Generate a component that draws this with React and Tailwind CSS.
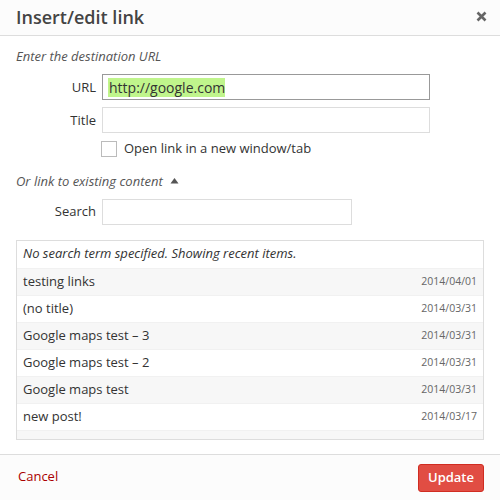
export default function App() {
  const rows = [
    ["testing links", "2014/04/01"],
    ["(no title)", "2014/03/31"],
    ["Google maps test – 3", "2014/03/31"],
    ["Google maps test – 2", "2014/03/31"],
    ["Google maps test", "2014/03/31"],
    ["new post!", "2014/03/17"],
  ];
  return (
    <div
      className="w-[500px] h-[500px] bg-white flex flex-col overflow-hidden text-[#333]"
      style={{ fontFamily: '"Open Sans", "Noto Sans", sans-serif' }}
    >
      <div className="h-[36px] shrink-0 bg-[#fcfcfc] border-b border-[#dddddd] flex items-center justify-between pl-[16px] pr-[13px]">
        <div className="text-[18px] font-semibold text-[#444] leading-none -mt-[1px]">Insert/edit link</div>
        <svg width="11" height="11" viewBox="0 0 11 11" className="-mt-[2px]">
          <path d="M1.5 1.5 L9.5 9.5 M9.5 1.5 L1.5 9.5" stroke="#666" strokeWidth="2.6" strokeLinecap="butt" />
        </svg>
      </div>
      <div className="flex-1 flex flex-col px-[16px] pt-[10px]">
        <div className="text-[13px] italic text-[#555] leading-[20px]">Enter the destination URL</div>
        <div className="flex items-center mt-[8px]">
          <div className="w-[86px] text-right text-[13px] pr-[6px] text-[#333] mt-[1px]">URL</div>
          <div className="w-[328px] h-[26px] border border-[#999] flex items-center px-[5px]">
            <span className="bg-[#c0f58c] text-[14px] leading-[19px] text-[#333] pl-[1px]">http://google.com</span>
          </div>
        </div>
        <div className="flex items-center mt-[7px]">
          <div className="w-[86px] text-right text-[13px] pr-[6px] text-[#333] mt-[1px]">Title</div>
          <div className="w-[328px] h-[26px] border border-[#dddddd]"></div>
        </div>
        <div className="flex items-center mt-[6px] pl-[85px]">
          <div className="w-[16px] h-[16px] border border-[#bbbbbb] bg-white"></div>
          <div className="text-[13px] ml-[7px] text-[#333]">Open link in a new window/tab</div>
        </div>
        <div className="flex items-center mt-[12px]">
          <div className="text-[13px] italic text-[#555] leading-[20px]">Or link to existing content</div>
          <svg width="9" height="7" viewBox="0 0 9 7" className="ml-[7px]">
            <path d="M0.5 6.5 L4.5 1 L8.5 6.5 Z" fill="#555" />
          </svg>
        </div>
        <div className="flex items-center mt-[8px]">
          <div className="w-[86px] text-right text-[13px] pr-[6px] text-[#333]">Search</div>
          <div className="w-[250px] h-[26px] border border-[#dddddd]"></div>
        </div>
        <div className="mt-[15px] w-[468px] h-[200px] border border-[#dddddd] overflow-hidden">
          <div className="h-[27px] flex items-center px-[6px] text-[13px] italic text-[#333] bg-white">
            No search term specified. Showing recent items.
          </div>
          {rows.map(([t, d], i) => (
            <div
              key={i}
              className={
                "h-[27px] flex items-center justify-between pl-[6px] pr-[6px] border-t border-[#f1f1f1] " +
                (i % 2 === 0 ? "bg-[#f7f7f7]" : "bg-white")
              }
            >
              <span className="text-[13px] text-[#333]">{t}</span>
              <span className="text-[10.5px] text-[#666]">{d}</span>
            </div>
          ))}
          <div className="h-[27px] border-t border-[#f1f1f1] bg-[#f7f7f7]"></div>
        </div>
      </div>
      <div className="h-[46px] shrink-0 bg-[#fcfcfc] border-t border-[#dddddd] flex items-center justify-between pl-[18px] pr-[16px]">
        <div className="text-[13px] text-[#aa0000] -mt-[2px]">Cancel</div>
        <div className="h-[28px] px-[9px] bg-[#e14d43] border border-[#d02c21] rounded-[3px] flex items-center text-white text-[13px] font-semibold">
          Update
        </div>
      </div>
    </div>
  );
}
